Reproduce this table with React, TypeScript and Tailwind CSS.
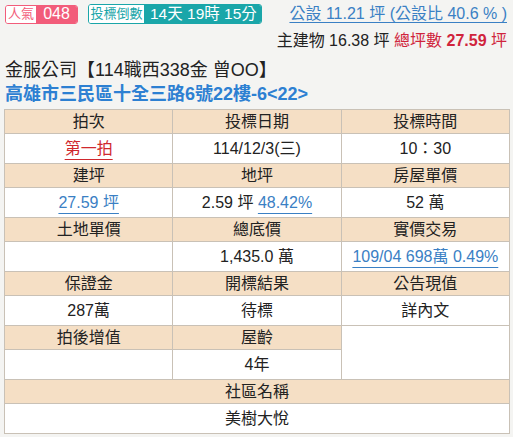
import React from "react";

const font = { fontFamily: '"Liberation Sans", "Noto Sans CJK TC", sans-serif' };

const Head = ({ children, span = 1 }: { children?: React.ReactNode; span?: number }) => (
  <td colSpan={span} className="h-[24px] border border-[#c9c1b6] bg-[#f5dfc5] text-center text-[16px] leading-[22px] text-[#222]">
    {children}
  </td>
);

const Val = ({ children, span = 1, rowSpan = 1 }: { children?: React.ReactNode; span?: number; rowSpan?: number }) => (
  <td
    colSpan={span}
    rowSpan={rowSpan}
    className="h-[30px] border border-[#c9c1b6] bg-white text-center text-[16px] leading-[22px] text-[#222]"
  >
    {children}
  </td>
);

const Link = ({ children, red }: { children: React.ReactNode; red?: boolean }) => (
  <span
    className={
      red
        ? "text-[#d0282e] underline decoration-[#d0282e] underline-offset-[5px]"
        : "text-[#3a80c4] underline decoration-[#3a80c4] underline-offset-[5px]"
    }
  >
    {children}
  </span>
);

export default function App() {
  return (
    <div className="min-h-[437px] w-[513px] bg-[#f4f4f2] px-[4px] pt-[4px]" style={font}>
      <div className="flex items-start justify-between">
        <div className="flex items-center pl-[1px]">
          <div className="flex h-[19px] overflow-hidden rounded-[3px] border border-[#f25c7a]">
            <span className="flex w-[30px] items-center justify-center bg-white text-[13px] text-[#f25c7a]">人氣</span>
            <span className="flex w-[41px] items-center justify-center bg-[#f25c7a] text-[16px] text-white">048</span>
          </div>
          <div className="ml-[10px] flex h-[20px] overflow-hidden rounded-[3px] border border-[#1aa6a9]">
            <span className="flex w-[55px] items-center justify-center bg-white text-[13px] text-[#1aa6a9]">投標倒數</span>
            <span className="flex items-center bg-[#1aa6a9] pl-[6px] pr-[4px] text-[15.5px] text-white">14天 19時 15分</span>
          </div>
        </div>
        <div className="flex flex-col items-end pr-[2px]">
          <span className="text-[16px] leading-[20px] text-[#3a80c4] underline decoration-[#3a80c4] underline-offset-[3px]">
            公設 11.21 坪 (公設比 40.6 % )
          </span>
          <span className="mt-[7px] text-[16px] leading-[20px] text-[#222]">
            主建物 16.38 坪 <span className="text-[#d0243c]">總坪數 <b>27.59</b> 坪</span>
          </span>
        </div>
      </div>

      <div className="mt-[7px] pl-[1px] text-[18px] leading-[24px] text-[#222]">金服公司【114職西338金 曾OO】</div>
      <div className="pl-[1px] text-[18px] font-bold leading-[24px] text-[#2d80d2]">高雄市三民區十全三路6號22樓-6&lt;22&gt;</div>

      <table className="mt-[3px] w-[506px] table-fixed border-collapse border border-[#a8a197]">
        <tbody>
          <tr><Head>拍次</Head><Head>投標日期</Head><Head>投標時間</Head></tr>
          <tr><Val><Link red>第一拍</Link></Val><Val>114/12/3(三)</Val><Val>10：30</Val></tr>
          <tr><Head>建坪</Head><Head>地坪</Head><Head>房屋單價</Head></tr>
          <tr><Val><Link>27.59 坪</Link></Val><Val>2.59 坪 <Link>48.42%</Link></Val><Val>52 萬</Val></tr>
          <tr><Head>土地單價</Head><Head>總底價</Head><Head>實價交易</Head></tr>
          <tr><Val></Val><Val>1,435.0 萬</Val><Val><Link>109/04 698萬 0.49%</Link></Val></tr>
          <tr><Head>保證金</Head><Head>開標結果</Head><Head>公告現值</Head></tr>
          <tr><Val>287萬</Val><Val>待標</Val><Val>詳內文</Val></tr>
          <tr><Head>拍後增值</Head><Head>屋齡</Head><Val rowSpan={2}></Val></tr>
          <tr><Val></Val><Val>4年</Val></tr>
          <tr className="border-t border-[#a8a197]"><Head span={3}>社區名稱</Head></tr>
          <tr><Val span={3}>美樹大悅</Val></tr>
        </tbody>
      </table>
    </div>
  );
}
